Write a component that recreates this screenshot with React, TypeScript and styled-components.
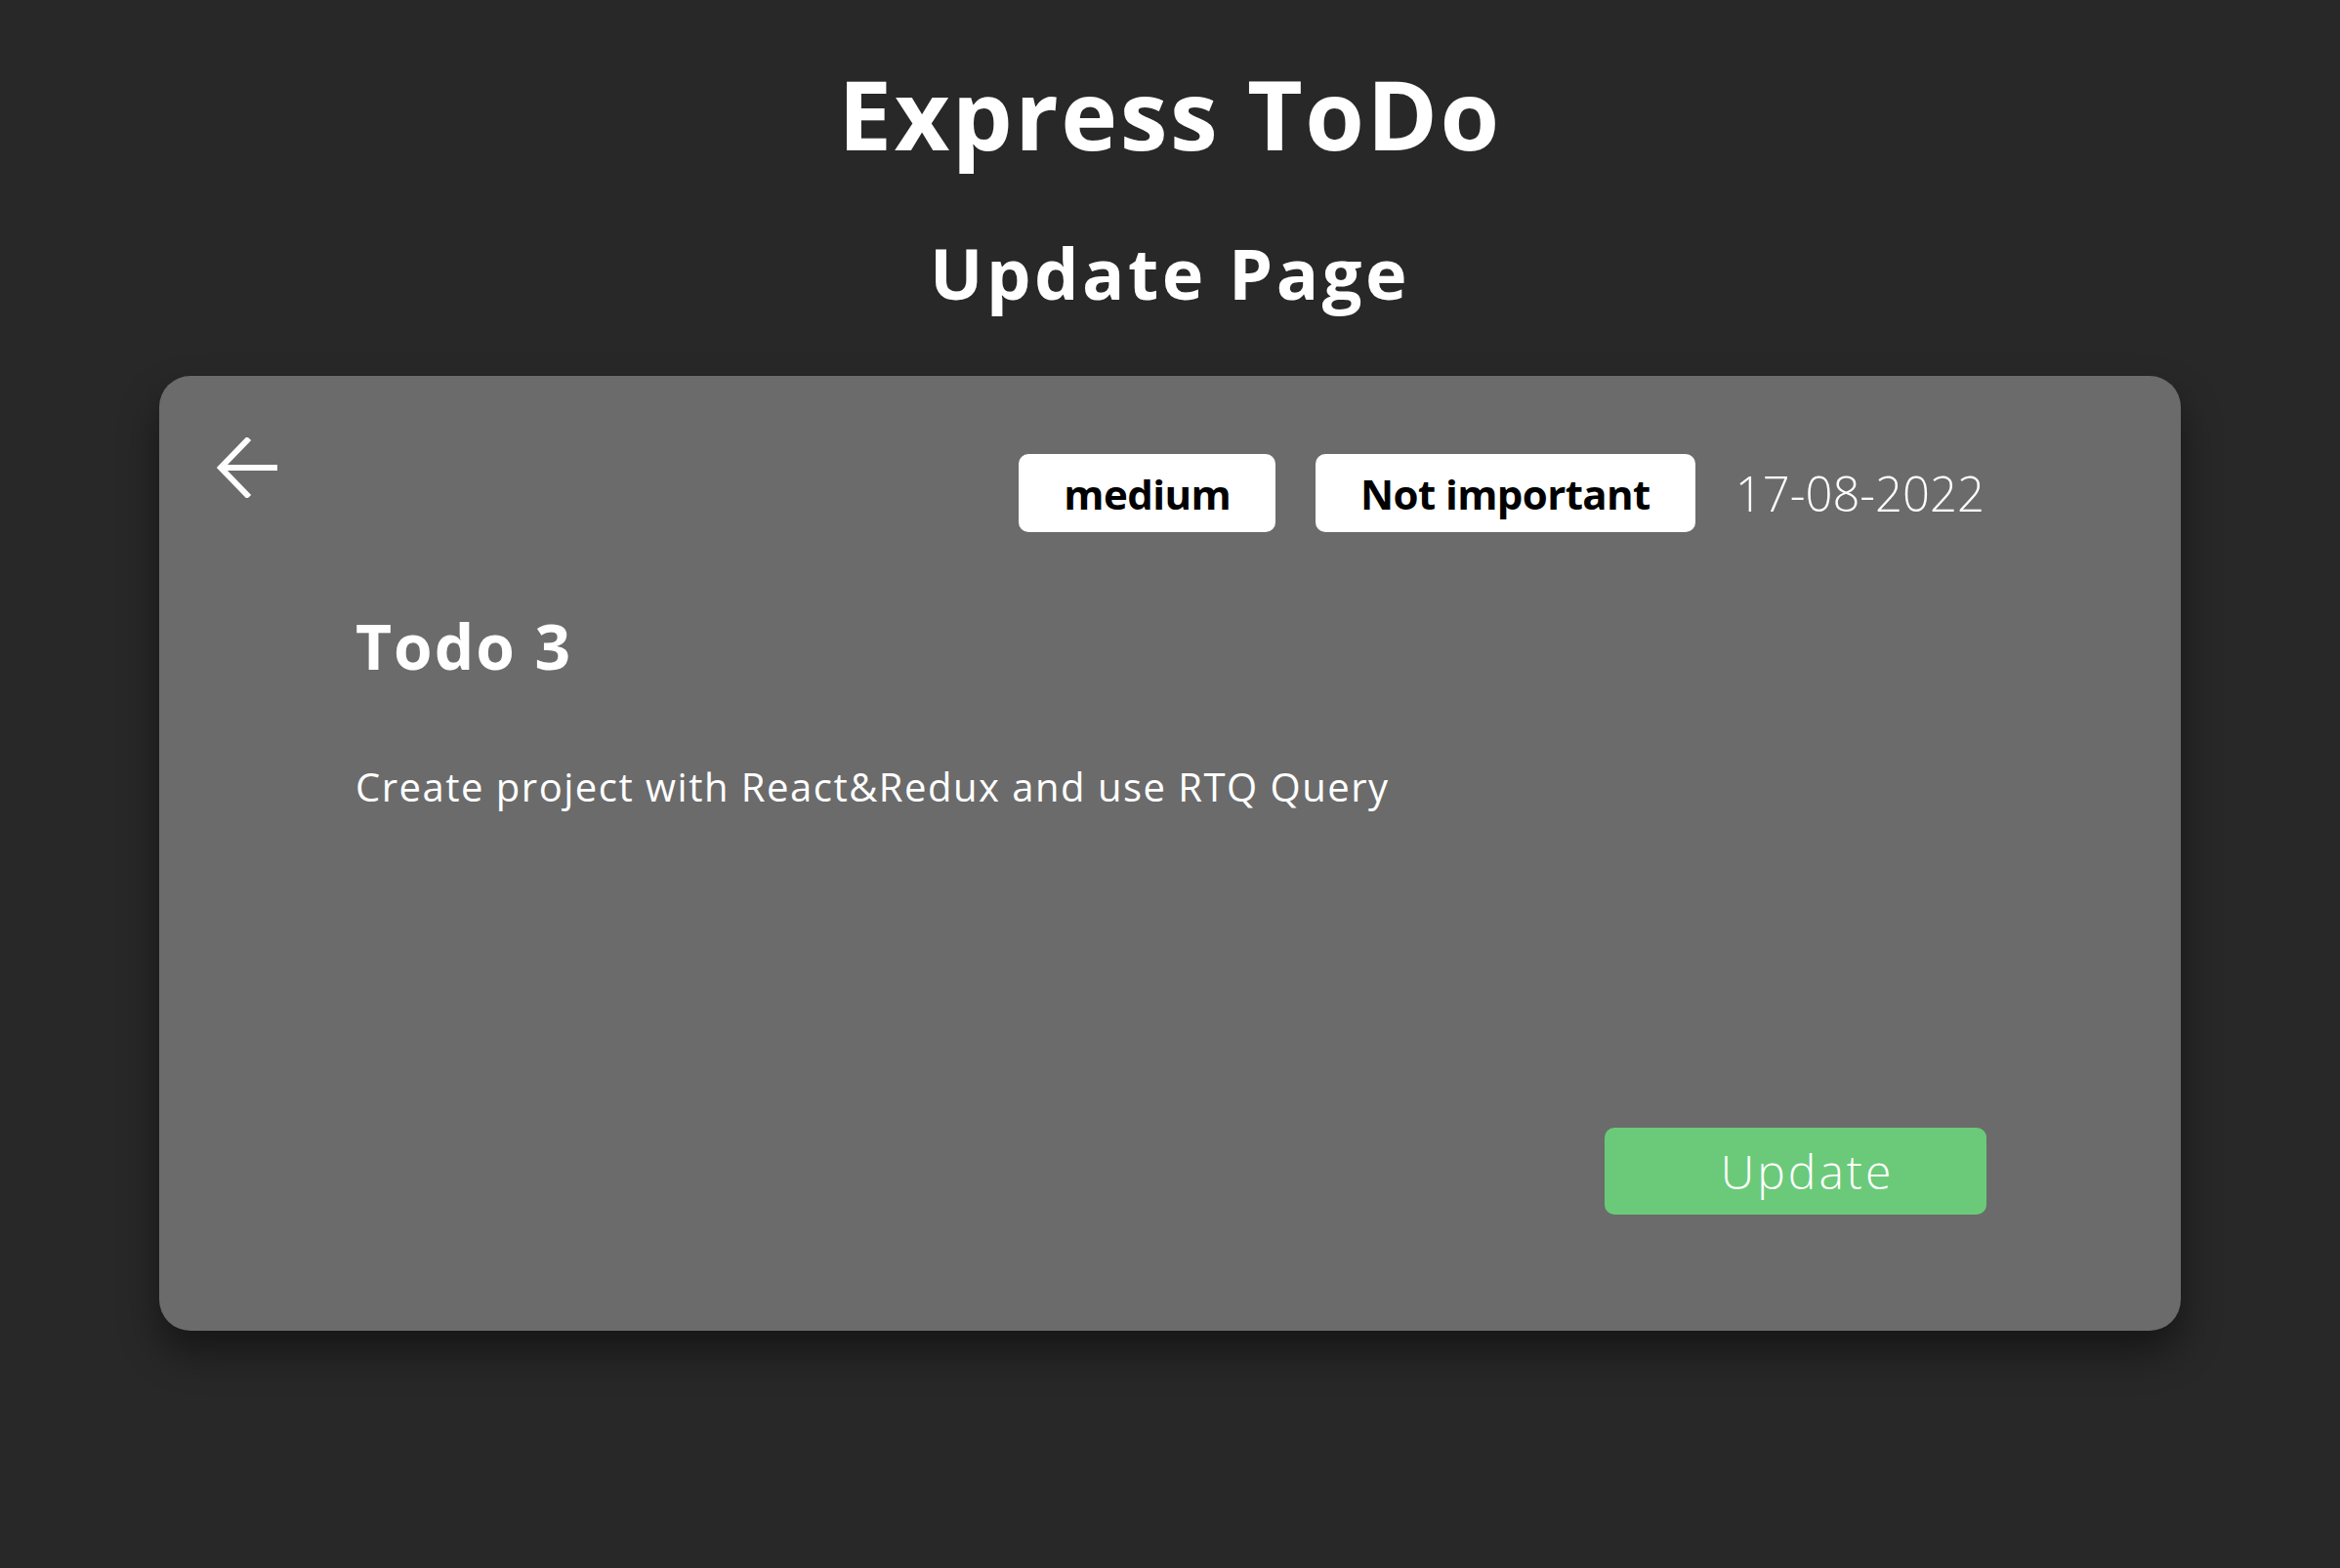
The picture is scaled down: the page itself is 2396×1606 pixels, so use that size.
import React from "react";
import styled, { createGlobalStyle } from "styled-components";

const GlobalStyle = createGlobalStyle`
  html, body {
    margin: 0;
    padding: 0;
    background: #282828;
  }
  body {
    font-family: "Open Sans", "Noto Sans", "Liberation Sans", sans-serif;
    color: #ffffff;
  }
  * { box-sizing: border-box; }
`;

const Page = styled.main`
  min-height: 100vh;
  padding-top: 67px;
  display: flex;
  flex-direction: column;
  align-items: center;
  background: #282828;
`;

const Title = styled.h1`
  margin: 0;
  font-size: 98px;
  line-height: 1;
  font-weight: 700;
  letter-spacing: 2.5px;
  color: #ffffff;
`;

const Subtitle = styled.h2`
  margin: 78px 0 0;
  font-size: 72px;
  line-height: 1;
  font-weight: 700;
  letter-spacing: 3.5px;
  color: #ffffff;
`;

const Card = styled.section`
  margin-top: 70px;
  width: 2070px;
  background: #6b6b6b;
  border-radius: 32px;
  box-shadow: 0 22px 40px rgba(0, 0, 0, 0.45);
  padding-bottom: 119px;
  display: flex;
  flex-direction: column;
`;

const TopRow = styled.div`
  display: flex;
  justify-content: space-between;
  align-items: flex-start;
  padding: 63px 201px 0 59px;
`;

const BackButton = styled.button`
  background: none;
  border: none;
  padding: 0;
  cursor: pointer;
  display: flex;
  color: #ffffff;
`;

const Meta = styled.div`
  display: flex;
  align-items: center;
  gap: 41px;
  margin-top: 17px;
`;

const Badge = styled.span`
  display: inline-flex;
  align-items: center;
  justify-content: center;
  height: 80px;
  padding: 0 46px;
  background: #ffffff;
  color: #000000;
  border-radius: 10px;
  font-size: 42px;
  font-weight: 700;
  letter-spacing: -0.6px;
`;

const DateText = styled.span`
  font-size: 49px;
  font-weight: 300;
  color: #ffffff;
`;

const Content = styled.div`
  padding-left: 201px;
  display: flex;
  flex-direction: column;
`;

const TodoTitle = styled.h3`
  margin: 85px 0 0;
  font-size: 64px;
  line-height: 1;
  font-weight: 700;
  letter-spacing: 2px;
  color: #ffffff;
`;

const Description = styled.p`
  margin: 92px 0 0;
  font-size: 40px;
  line-height: 1;
  font-weight: 400;
  letter-spacing: 1.5px;
  color: #ffffff;
`;

const Footer = styled.div`
  display: flex;
  justify-content: flex-end;
  padding-right: 199px;
  margin-top: 329px;
`;

const UpdateButton = styled.button`
  width: 391px;
  height: 89px;
  padding: 0 0 0 24px;
  border: none;
  border-radius: 10px;
  background: #6bca7a;
  color: #ffffff;
  font-family: inherit;
  font-size: 48px;
  font-weight: 300;
  letter-spacing: 3px;
  cursor: pointer;
`;

const ArrowIcon = () => (
  <svg width="62" height="62" viewBox="0 0 62 62" fill="none">
    <path
      d="M62 31 H5 M33 1 L4 31 L33 61"
      stroke="#ffffff"
      strokeWidth="6"
      strokeLinejoin="miter"
    />
  </svg>
);

export default function App() {
  return (
    <>
      <GlobalStyle />
      <Page>
        <Title>Express ToDo</Title>
        <Subtitle>Update Page</Subtitle>
        <Card>
          <TopRow>
            <BackButton aria-label="Back">
              <ArrowIcon />
            </BackButton>
            <Meta>
              <Badge>medium</Badge>
              <Badge>Not important</Badge>
              <DateText>17-08-2022</DateText>
            </Meta>
          </TopRow>
          <Content>
            <TodoTitle>Todo 3</TodoTitle>
            <Description>
              Create project with React&amp;Redux and use RTQ Query
            </Description>
          </Content>
          <Footer>
            <UpdateButton>Update</UpdateButton>
          </Footer>
        </Card>
      </Page>
    </>
  );
}
